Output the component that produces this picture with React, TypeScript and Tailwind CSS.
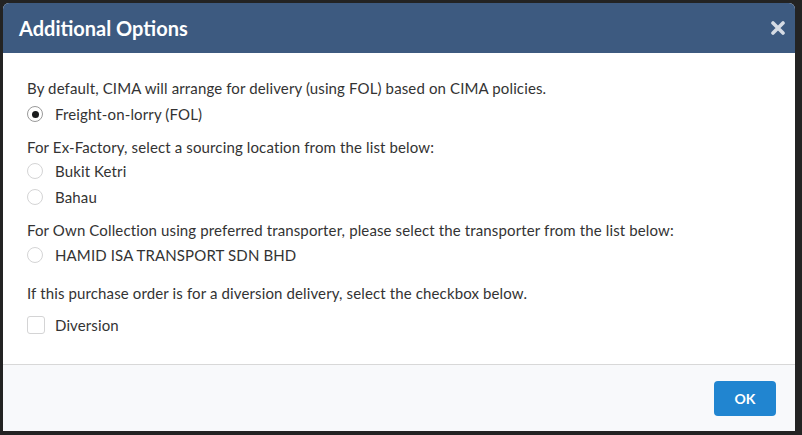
import React from "react";

function Radio({ checked, label }: { checked?: boolean; label: string }) {
  return (
    <div className="flex h-[26px] items-center">
      <span
        className={`flex h-[16px] w-[16px] items-center justify-center rounded-full border bg-white ${
          checked ? "border-[#9a9a9a]" : "border-[#d4d4d5]"
        }`}
      >
        {checked && <span className="h-[7px] w-[7px] rounded-full bg-[#1b1c1d]" />}
      </span>
      <span className="ml-[12px]">{label}</span>
    </div>
  );
}

export default function App() {
  return (
    <div
      className="h-[435px] w-[802px] bg-[#232323] p-[3px] pr-[7px] pb-[4px]"
      style={{ fontFamily: "Lato, 'Noto Sans', sans-serif" }}
    >
      <div className="flex h-full w-full flex-col overflow-hidden rounded-t-[6px] bg-white">
        <div className="flex h-[50px] items-center justify-between bg-[#3d5a80] pl-[16px] pr-[10px]">
          <span className="text-[20px] font-bold text-white">Additional Options</span>
          <svg width="14" height="14" viewBox="0 0 14 14">
            <path d="M2 2 L12 12 M12 2 L2 12" stroke="#d5dbe4" strokeWidth="3.6" strokeLinecap="round" />
          </svg>
        </div>
        <div className="flex-1 px-[24px] pt-[25px] text-[15px] leading-5 tracking-[0.13px] text-[#333333]">
          <p>By default, CIMA will arrange for delivery (using FOL) based on CIMA policies.</p>
          <div className="mt-[3px]">
            <Radio checked label="Freight-on-lorry (FOL)" />
          </div>
          <p className="mt-[10px]">For Ex-Factory, select a sourcing location from the list below:</p>
          <div className="mt-[1px]">
            <Radio label="Bukit Ketri" />
            <Radio label="Bahau" />
          </div>
          <p className="mt-[10px]">
            For Own Collection using preferred transporter, please select the transporter from the list below:
          </p>
          <div className="mt-[2px]">
            <Radio label="HAMID ISA TRANSPORT SDN BHD" />
          </div>
          <p className="mt-[15px]">If this purchase order is for a diversion delivery, select the checkbox below.</p>
          <div className="mt-[9px] flex h-[26px] items-center">
            <span className="h-[18px] w-[18px] rounded-[3px] border border-[#d4d4d5] bg-white" />
            <span className="ml-[10px]">Diversion</span>
          </div>
        </div>
        <div className="flex h-[67px] items-center justify-end border-t border-[#d8d8d8] bg-[#f8f9fb] pr-[19px]">
          <button className="h-[35px] w-[62px] rounded-[4px] bg-[#2185d0] text-[14px] font-bold text-white">
            OK
          </button>
        </div>
      </div>
    </div>
  );
}
